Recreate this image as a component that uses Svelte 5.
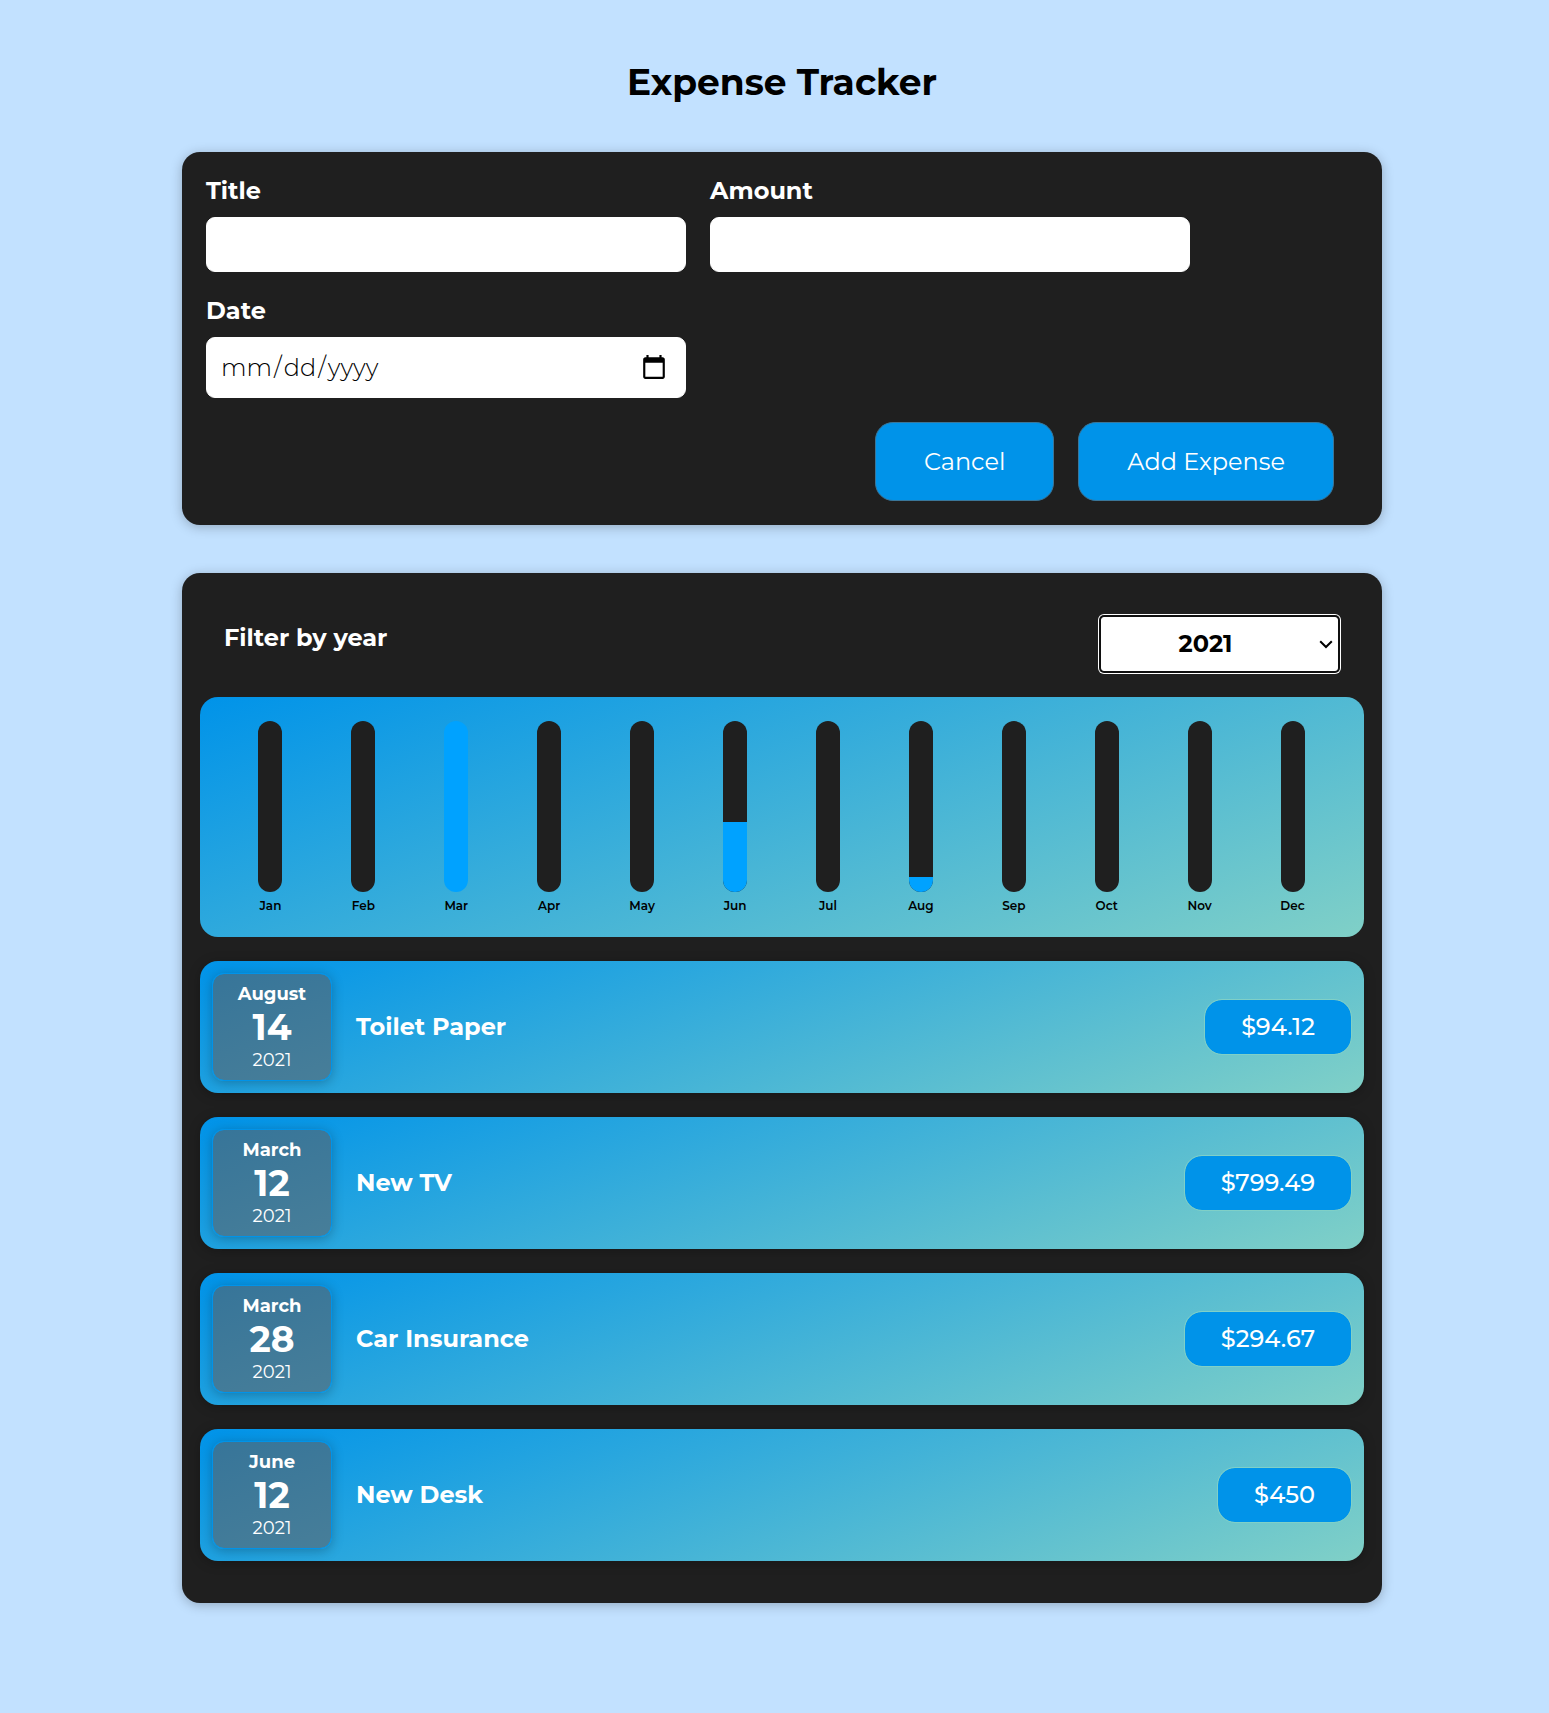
<script>
  const months = ['Jan', 'Feb', 'Mar', 'Apr', 'May', 'Jun', 'Jul', 'Aug', 'Sep', 'Oct', 'Nov', 'Dec'];
  const monthNames = [
    'January', 'February', 'March', 'April', 'May', 'June',
    'July', 'August', 'September', 'October', 'November', 'December'
  ];

  let expenses = $state([
    { id: 1, title: 'Toilet Paper', amount: 94.12, year: 2021, month: 7, day: 14 },
    { id: 2, title: 'New TV', amount: 799.49, year: 2021, month: 2, day: 12 },
    { id: 3, title: 'Car Insurance', amount: 294.67, year: 2021, month: 2, day: 28 },
    { id: 4, title: 'New Desk', amount: 450, year: 2021, month: 5, day: 12 }
  ]);

  let title = $state('');
  let amount = $state('');
  let date = $state('');
  let year = $state('2021');

  let shown = $derived(expenses.filter((e) => String(e.year) === year));
  let totals = $derived(
    months.map((_, i) => shown.filter((e) => e.month === i).reduce((sum, e) => sum + e.amount, 0))
  );
  let highest = $derived(Math.max(...totals, 1));

  function clear() {
    title = '';
    amount = '';
    date = '';
  }

  function submit(event) {
    event.preventDefault();
    if (!title || !amount || !date) return;
    const [y, m, d] = date.split('-').map(Number);
    expenses.push({ id: expenses.length + 1, title, amount: Number(amount), year: y, month: m - 1, day: d });
    clear();
  }
</script>

<main>
  <h1>Expense Tracker</h1>

  <form class="card entry" onsubmit={submit}>
    <div class="fields">
      <div class="field">
        <label for="title">Title</label>
        <input id="title" type="text" bind:value={title} />
      </div>
      <div class="field">
        <label for="amount">Amount</label>
        <input id="amount" type="number" min="0.01" step="0.01" bind:value={amount} />
      </div>
      <div class="field">
        <label for="date">Date</label>
        <input id="date" class="date-input" type="date" bind:value={date} />
      </div>
    </div>
    <div class="actions">
      <button type="button" onclick={clear}>Cancel</button>
      <button type="submit">Add Expense</button>
    </div>
  </form>

  <section class="card overview">
    <div class="filter">
      <label for="year">Filter by year</label>
      <div class="picker">
        <select id="year" bind:value={year}>
          <option value="2022">2022</option>
          <option value="2021">2021</option>
          <option value="2020">2020</option>
          <option value="2019">2019</option>
        </select>
        <svg class="chevron" width="14" height="9" viewBox="0 0 14 9" aria-hidden="true">
          <path d="M1.200 1.200 7 7l5.800-5.800" fill="none" stroke="#000" stroke-width="2" />
        </svg>
      </div>
    </div>

    <div class="chart">
      {#each months as name, i}
        <div class="column">
          <div class="bar">
            <div class="fill" style="height: {Math.round((totals[i] / highest) * 100)}%"></div>
          </div>
          <span class="name">{name}</span>
        </div>
      {/each}
    </div>

    <ul class="list">
      {#each shown as item (item.id)}
        <li class="item">
          <div class="date">
            <span class="month">{monthNames[item.month]}</span>
            <span class="day">{item.day}</span>
            <span class="year">{item.year}</span>
          </div>
          <h2>{item.title}</h2>
          <div class="price">${item.amount}</div>
        </li>
      {/each}
    </ul>
  </section>
</main>

<style>
  :global(body) {
    background: #c2e1ff;
  }

  main,
  input,
  select,
  button {
    font-family: Montserrat, Inter, 'Open Sans', sans-serif;
  }

  main {
    box-sizing: border-box;
    max-width: 1215px;
    margin: 0 auto;
    padding: 60px 0 110px 15px;
    font-size: 24px;
    line-height: 29px;
  }

  main * {
    box-sizing: border-box;
  }

  h1 {
    margin: 0 0 48px;
    font-size: 36px;
    font-weight: 700;
    line-height: 44px;
    text-align: center;
    color: #000;
  }

  .card {
    border-radius: 18px;
    background: #1f1f1f;
    box-shadow: 0 2px 12px rgba(0, 0, 0, 0.25);
  }

  .entry {
    padding: 24px;
    margin-bottom: 48px;
  }

  .fields {
    display: flex;
    flex-wrap: wrap;
    gap: 24px;
  }

  .field {
    width: 480px;
    max-width: 100%;
  }

  label {
    display: block;
    font-weight: 700;
    color: #fff;
  }

  .field label {
    margin-bottom: 12px;
  }

  input {
    display: block;
    width: 100%;
    height: 55px;
    padding: 12px;
    border: 1px solid #fff;
    border-radius: 9px;
    background: #fff;
    font-size: 24px;
    font-weight: 300;
    color: #000;
  }

  .date-input {
    height: 61px;
    padding-right: 17px;
  }

  .date-input::-webkit-datetime-edit-month-field,
  .date-input::-webkit-datetime-edit-day-field,
  .date-input::-webkit-datetime-edit-year-field {
    padding: 0 2px;
  }

  .date-input::-webkit-calendar-picker-indicator {
    width: 28px;
    height: 28px;
    padding: 0;
  }

  .actions {
    display: flex;
    justify-content: flex-end;
    gap: 24px;
    margin-top: 24px;
    padding-right: 24px;
  }

  button {
    padding: 24px 48px;
    border: 1px solid #3a7699;
    border-radius: 18px;
    background: #0093e9;
    font-size: 24px;
    line-height: 29px;
    color: #fff;
    cursor: pointer;
  }

  .overview {
    padding: 44px 18px 42px;
  }

  .filter {
    display: flex;
    align-items: flex-start;
    justify-content: space-between;
    padding: 0 26px 26px 24px;
  }

  .filter label {
    line-height: 42px;
  }

  .picker {
    position: relative;
  }

  .chevron {
    position: absolute;
    top: 23px;
    right: 5px;
    pointer-events: none;
  }

  select {
    display: block;
    width: 237px;
    height: 54px;
    padding: 0 28px 2px 0;
    border: 1px solid #fff;
    border-radius: 3px;
    outline: none;
    appearance: none;
    background: #fff;
    box-shadow: 0 0 0 2px #101010, 0 0 0 3px #fff;
    font-size: 24px;
    font-weight: 700;
    text-align: center;
    color: #000;
  }

  .chart {
    display: grid;
    grid-template-columns: repeat(12, 1fr);
    height: 240px;
    padding: 24px 25px 24px 24px;
    border-radius: 18px;
    background: linear-gradient(160deg, #0093e9 0%, #80d0c7 100%);
  }

  .column {
    display: flex;
    flex-direction: column;
    align-items: center;
    gap: 6px;
  }

  .bar {
    display: flex;
    flex: 1;
    flex-direction: column;
    justify-content: flex-end;
    width: 24px;
    border-radius: 12px;
    background: #1f1f1f;
    overflow: hidden;
  }

  .fill {
    background: #00a2ff;
  }

  .name {
    font-size: 12px;
    font-weight: 600;
    line-height: 15px;
    color: #000;
  }

  .list {
    display: grid;
    gap: 24px;
    margin: 24px 0 0;
    padding: 0;
    list-style: none;
  }

  .item {
    display: flex;
    align-items: center;
    gap: 24px;
    padding: 12px;
    border-radius: 18px;
    background: linear-gradient(160deg, #0093e9 0%, #80d0c7 100%);
    box-shadow: 0 2px 12px rgba(0, 0, 0, 0.25);
  }

  .date {
    display: flex;
    flex-direction: column;
    align-items: center;
    width: 120px;
    padding: 9px 0;
    border: 1px solid #0093e9;
    border-radius: 12px;
    background: linear-gradient(160deg, #377599, #477e99) padding-box;
    box-shadow: 0 2px 12px rgba(0, 0, 0, 0.25);
    color: #fff;
  }

  .month,
  .year {
    font-size: 18px;
    line-height: 22px;
  }

  .month {
    font-weight: 700;
  }

  .day {
    font-size: 36px;
    font-weight: 700;
    line-height: 44px;
  }

  h2 {
    flex: 1;
    margin: 0;
    padding-bottom: 2px;
    font-size: 24px;
    font-weight: 700;
    color: #fff;
  }

  .price {
    padding: 12px 36px;
    border: 1px solid #80d0c7;
    border-radius: 18px;
    background: #0093e9 padding-box;
    font-weight: 500;
    line-height: 30px;
    color: #fff;
  }
</style>
